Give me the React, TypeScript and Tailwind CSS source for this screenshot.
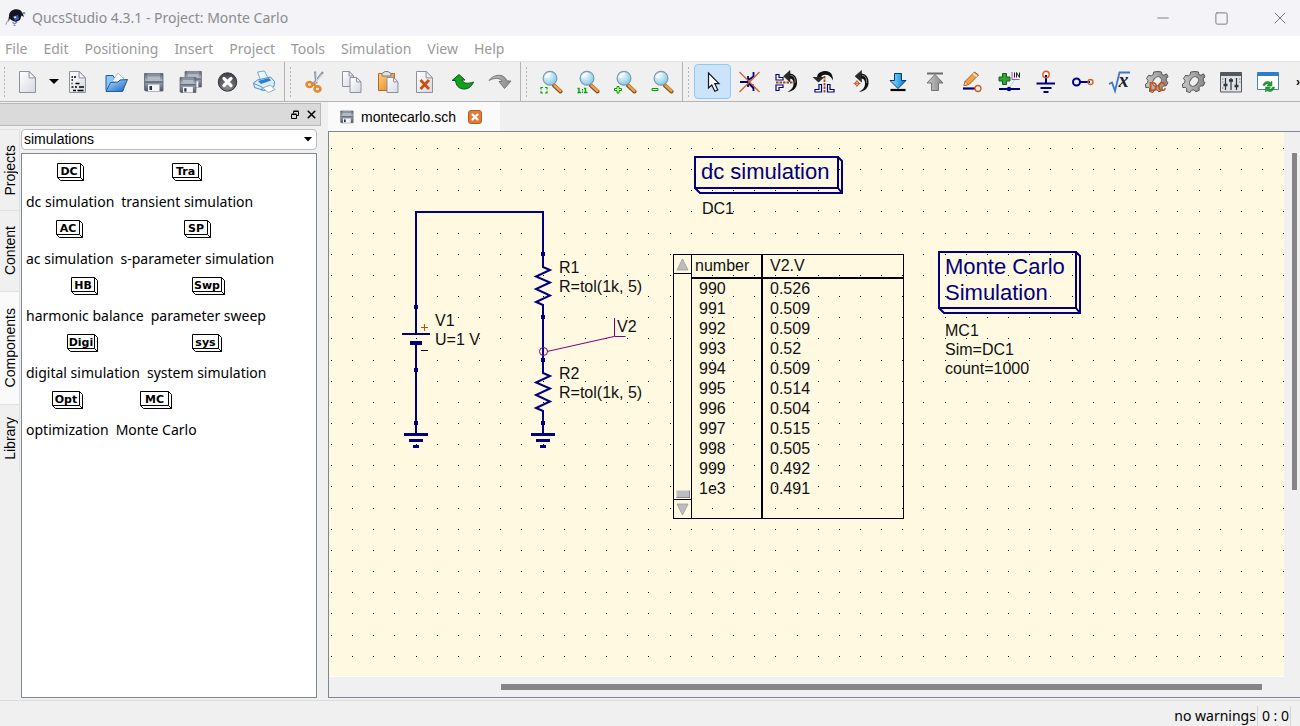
import type { ReactNode } from 'react';
import { Minus, Square, X } from 'lucide-react';

const NAVY = '#00007f';
const PITCH = 21.16;

const menus = ['File', 'Edit', 'Positioning', 'Insert', 'Project', 'Tools', 'Simulation', 'View', 'Help'];

const sideTabs = [
  { label: 'Projects', className: 'h-[81px] bg-[#f0f0f0]' },
  { label: 'Content', className: 'h-[81px] bg-[#f0f0f0]' },
  { label: 'Components', className: 'h-[113px] bg-[#fafafa]' },
  { label: 'Library', className: 'h-[68px] bg-[#f0f0f0]' },
];

const componentRows = [
  [{ icon: 'DC', w: 27, label: 'dc simulation' }, { icon: 'Tra', w: 30, label: 'transient simulation' }],
  [{ icon: 'AC', w: 27, label: 'ac simulation' }, { icon: 'SP', w: 27, label: 's-parameter simulation' }],
  [{ icon: 'HB', w: 27, label: 'harmonic balance' }, { icon: 'Swp', w: 33, label: 'parameter sweep' }],
  [{ icon: 'Digi', w: 31, label: 'digital simulation' }, { icon: 'sys', w: 30, label: 'system simulation' }],
  [{ icon: 'Opt', w: 31, label: 'optimization' }, { icon: 'MC', w: 32, label: 'Monte Carlo' }],
];

const results = [
  ['990', '0.526'],
  ['991', '0.509'],
  ['992', '0.509'],
  ['993', '0.52'],
  ['994', '0.509'],
  ['995', '0.514'],
  ['996', '0.504'],
  ['997', '0.515'],
  ['998', '0.505'],
  ['999', '0.492'],
  ['1e3', '0.491'],
];

function gridPath(cols: number, rows: number) {
  let d = '';
  for (let r = 0; r < rows; r++) {
    for (let c = 0; c < cols; c++) {
      d += `M${Math.floor(2.5 + c * PITCH)} ${Math.floor(16.4 + r * PITCH)}h1v1h-1z`;
    }
  }
  return d;
}

const dots = gridPath(100, 60);

function Icon({ children }: { children: ReactNode }) {
  return (
    <svg width="24" height="24" viewBox="0 0 24 24" className="shrink-0" aria-hidden="true">
      {children}
    </svg>
  );
}

function Gradients() {
  return (
    <svg width="0" height="0" className="absolute" aria-hidden="true">
      <defs>
        <linearGradient id="page" x1="0" y1="0" x2="1" y2="1">
          <stop offset="0" stopColor="#fff" />
          <stop offset="1" stopColor="#d6d9e2" />
        </linearGradient>
        <linearGradient id="steel" x1="0" y1="0" x2="0" y2="1">
          <stop offset="0" stopColor="#5a6370" />
          <stop offset="0.4" stopColor="#a9b2bd" />
          <stop offset="1" stopColor="#4a5568" />
        </linearGradient>
        <linearGradient id="folder" x1="0" y1="0" x2="1" y2="1">
          <stop offset="0" stopColor="#b9e0fb" />
          <stop offset="1" stopColor="#1463bd" />
        </linearGradient>
        <linearGradient id="orange" x1="0" y1="0" x2="1" y2="1">
          <stop offset="0" stopColor="#ffd27c" />
          <stop offset="1" stopColor="#e2801c" />
        </linearGradient>
        <linearGradient id="blue" x1="0" y1="0" x2="1" y2="0">
          <stop offset="0" stopColor="#9be0ff" />
          <stop offset="0.5" stopColor="#45b3f0" />
          <stop offset="1" stopColor="#0868b4" />
        </linearGradient>
        <linearGradient id="gray" x1="0" y1="0" x2="1" y2="0">
          <stop offset="0" stopColor="#c9c9c9" />
          <stop offset="1" stopColor="#868686" />
        </linearGradient>
        <radialGradient id="glass" cx="0.35" cy="0.3" r="0.8">
          <stop offset="0" stopColor="#f2fcff" />
          <stop offset="0.5" stopColor="#b5e1f5" />
          <stop offset="1" stopColor="#7ebfe2" />
        </radialGradient>
        <radialGradient id="dark" cx="0.5" cy="0.8" r="0.8">
          <stop offset="0" stopColor="#8b8d90" />
          <stop offset="1" stopColor="#3b3d42" />
        </radialGradient>
      </defs>
    </svg>
  );
}

function Page({ x = 2.5, y = 1.5, w = 16, h = 21 }) {
  const f = w * 0.4;
  return (
    <g stroke="#8d919c" strokeLinejoin="round">
      <path d={`M${x} ${y}h${w - f}l${f} ${f}v${h - f}h${-w}z`} fill="url(#page)" />
      <path d={`M${x + w - f} ${y}v${f}h${f}z`} fill="#f4f5f9" />
    </g>
  );
}

function Floppy({ x = 3.5, y = 3, s = 18 }) {
  return (
    <g transform={`translate(${x} ${y}) scale(${s / 18})`}>
      <path d="M0 0.5H18.5V18H1L0 17Z" fill="url(#steel)" stroke="#59606c" strokeWidth="0.8" />
      <path d="M3 0.8H15.5V8H3Z" fill="#b3bac4" />
      <path d="M3 0.8H15.5V3.5H3Z" fill="#87909c" />
      <path d="M3.5 11.5H15V18H3.5Z" fill="#f3f5f8" />
      <path d="M5 13H7.5V17H5Z" fill="#27303c" />
      <path d="M0.5 9H18" stroke="#3f4854" />
    </g>
  );
}

function Lens({ children }: { children: ReactNode }) {
  return (
    <Icon>
      <path d="M15 15.5L21.5 21.5" stroke="#7a4a1c" strokeWidth="4" strokeLinecap="round" />
      <path d="M15.5 15.5L21.5 21" stroke="#f0a04a" strokeWidth="2.4" strokeLinecap="round" />
      <circle cx="11" cy="8.3" r="6.9" fill="url(#glass)" stroke="#7c99a8" strokeWidth="1.2" />
      <path d="M6.8 8a4.4 4.4 0 0 1 5-4.2" stroke="#fff" strokeWidth="1.6" fill="none" />
      {children}
    </Icon>
  );
}

function Gear() {
  return (
    <g>
      <path
        d="M13 1.5l3.500.500.300 2.500 2.200.800 2.500-1.500 1.500 3-1.800 2 .300 2.500 1.500 1.200-2 3.500-2.300-.200-1.700 2 .300 2.500-3.500 1.500-1.800-2-2.500.500-1.500 2.200-3.500-1 .300-2.700-1.500-1.500-2.500.300-.300-3.500 2.200-1.400.300-2.300L1.500 8.500l2.200-3.300 2.500.800 2-1.500.500-2.500z"
        fill="url(#gray)"
        stroke="#555"
        strokeLinejoin="round"
      />
      <ellipse cx="12" cy="11.500" rx="3.800" ry="5.200" fill="#efefef" stroke="#5c5c5c" transform="rotate(38 12 11.500)" />
    </g>
  );
}

function HookArrow() {
  return (
    <g>
      <path d="M14 3.500C20 3.500 22.500 8 22 13.500S17 21.500 12.500 22C17 19.500 18.800 16.500 18.500 13S17 8.500 14 8.500z" fill="#111" />
      <path d="M8.500 6.200L15 0.500V12z" fill="#2a2a2a" stroke="#111" strokeWidth="0.500" />
      <path d="M15.500 5.500c3.500 0 4.800 3 4.600 7.500" stroke="#8a8a8a" fill="none" />
    </g>
  );
}

const fileIcons = [
  {
    name: 'Text document',
    icon: (
      <Icon>
        <Page />
        <path d="M4.500 7H6M7 7h2M4.500 10H6M4.500 13.500h1M8.500 13.500h4M4.500 17h2M8 17h2M12 17h5M6 20.500h3M10.500 20.500h6" stroke="#000" strokeWidth="1.500" />
      </Icon>
    ),
  },
  {
    name: 'Open',
    icon: (
      <Icon>
        <path d="M2 5.500h7l1 2h9v13H2z" fill="#8cc6f3" stroke="#1b5da8" />
        <path d="M8.500 11L14 3l6 6-2 7z" fill="#f7f9fd" stroke="#a1b1ca" strokeWidth="0.800" />
        <path d="M2 21.500L6.500 12.500l7.500-.5 2-2 7.500-.5-5 12z" fill="url(#folder)" stroke="#1a5dab" />
      </Icon>
    ),
  },
  { name: 'Save', icon: <Icon><Floppy /></Icon> },
  { name: 'Save all', icon: <Icon><Floppy x={7} y={1} s={16} /><Floppy x={2} y={7} s={15.5} /></Icon> },
  {
    name: 'Close',
    icon: (
      <Icon>
        <circle cx="12.500" cy="12" r="9.200" fill="url(#dark)" stroke="#33353a" />
        <path d="M9 8.500l7 7M16 8.500l-7 7" stroke="#fff" strokeWidth="3.200" strokeLinecap="round" />
      </Icon>
    ),
  },
  {
    name: 'Print',
    icon: (
      <Icon>
        <path d="M5.500 2l7-1 4 8-7 4z" fill="#eef7ff" stroke="#6fa8dd" />
        <path d="M1.500 13l4-3 13-3 4 4.500-.5 5-10 4-9.500-3z" fill="#dcecfa" stroke="#4d8fd0" />
        <path d="M6 11l11-3 2 2.500-10 3.500z" fill="#2b7fd0" />
        <path d="M2 13.500l8 3.500v4" stroke="#5a9ad8" fill="none" />
        <path d="M10.500 18l8-3 4.500 4.500-6.500 3z" fill="#fff" stroke="#7893b5" strokeWidth="0.800" />
      </Icon>
    ),
  },
];

const editIcons = [
  {
    name: 'Cut',
    icon: (
      <Icon>
        <path d="M12 1.500l1.500 12M20 2L9.500 15" stroke="#8d97a6" strokeWidth="2.200" />
        <path d="M13 3l1 9M19 4l-7 9" stroke="#e7ebf2" strokeWidth="0.800" />
        <ellipse cx="6.500" cy="14.500" rx="3" ry="2.500" fill="none" stroke="#e8882c" strokeWidth="2.600" />
        <ellipse cx="14.500" cy="19" rx="3" ry="2.600" fill="none" stroke="#e8882c" strokeWidth="2.600" />
        <path d="M10 14l3 2" stroke="#e8882c" strokeWidth="2.500" />
      </Icon>
    ),
  },
  { name: 'Copy', icon: <Icon><Page x={2.5} y={1.5} w={11} h={15} /><Page x={10} y={7.5} w={11} h={15} /></Icon> },
  {
    name: 'Paste',
    icon: (
      <Icon>
        <path d="M1.500 3.500h16v17h-16z" fill="url(#orange)" stroke="#b8691d" />
        <path d="M5 6V3.500l3-2h3l3 2V6z" fill="#dfe2e8" stroke="#777d88" />
        <Page x={10} y={7.5} w={11} h={15} />
      </Icon>
    ),
  },
  {
    name: 'Delete',
    icon: (
      <Icon>
        <Page x={2.5} />
        <path d="M6.500 10l8.500 9M15 10l-8.500 9" stroke="#cc4f12" strokeWidth="2.800" />
      </Icon>
    ),
  },
  {
    name: 'Undo',
    icon: (
      <Icon>
        <path d="M1 10.500L8 4.500l6 5.500h-3c1 3 5 4.500 11.500 2-2 5-5.500 7-9.500 7-5 0-8-3.500-8.500-8.500z" fill="#14a01c" stroke="#0a5c10" strokeLinejoin="round" />
      </Icon>
    ),
  },
  {
    name: 'Redo',
    icon: (
      <Icon>
        <path d="M1 10.500C5 4.500 16 2.500 19 11h4l-6.500 7.500-5.500-7h3C12.500 7.500 6 7.500 1 10.500z" fill="url(#gray)" stroke="#767676" strokeLinejoin="round" />
      </Icon>
    ),
  },
];

const zoomIcons = [
  { name: 'Zoom to fit', icon: <Lens><path d="M2 19.500V17.500h2M6 17.500h2v2M8 21v2H6M4 23H2V21" stroke="#0aa00a" strokeWidth="1.200" fill="none" /></Lens> },
  { name: 'Zoom 1:1', icon: <Lens><path d="M1.500 18.500h1.500v4M1.500 22.500h3.500M6.500 19v1.500M6.500 21.500v1.500M8 18.500h1.500v4M8 22.500h3.500" stroke="#0aa00a" strokeWidth="1.400" fill="none" /></Lens> },
  { name: 'Zoom in', icon: <Lens><path d="M4 16.500h2v2h2.500v2H6v2.500H4v-2.500H1.500v-2H4z" fill="#d3ffc0" stroke="#0aa00a" /></Lens> },
  { name: 'Zoom out', icon: <Lens><path d="M2 18.500h6v2H2z" fill="#d3ffc0" stroke="#0aa00a" /></Lens> },
];

const drawIcons = [
  { name: 'Select', icon: <Icon><path d="M7.500 3v15l3.300-3 3 6.300 3-1.400-3-6.200h4.200z" fill="#fff" stroke="#15151f" strokeWidth="1.200" /></Icon> },
  {
    name: 'Deactivate',
    icon: (
      <Icon>
        <path d="M2 12h8M10 6v11M10.500 10l5-3.500V2M10.500 13l5 4v4" stroke={NAVY} strokeWidth="1.800" fill="none" />
        <path d="M11 15l4.500-1-.5 5z" fill={NAVY} />
        <path d="M1.500 2l20 20M21.500 2l-20 20" stroke="#d0632a" strokeWidth="1.300" />
      </Icon>
    ),
  },
  {
    name: 'Mirror about x axis',
    icon: (
      <Icon>
        <path d="M1 4.500h3v3h4V10H1zM1 15h7v2.500H4v3H1z" fill="#fff" stroke={NAVY} strokeWidth="1.200" />
        <HookArrow />
        <path d="M1 12.500h17" stroke="#9a4a10" strokeWidth="1.800" strokeDasharray="2.500 1" />
      </Icon>
    ),
  },
  {
    name: 'Mirror about y axis',
    icon: (
      <Icon>
        <path d="M5 8C5 3 9 1 13.500 1c5 0 7.500 3.500 7.500 9.500C19 6.500 16.500 4.500 13 4.700 10.500 5 9 6 9 8z" fill="#111" />
        <path d="M0.500 7h12L6.500 12.500z" fill="#2a2a2a" />
        <path d="M9.500 14.500v7.500H3v-2.500h4v-5zM15.500 14.500v7.500H22v-2.500h-4v-5z" fill="#fff" stroke={NAVY} strokeWidth="1.200" />
        <path d="M12.500 6v17" stroke="#9a4a10" strokeWidth="1.800" strokeDasharray="2.500 1" />
      </Icon>
    ),
  },
  {
    name: 'Rotate',
    icon: (
      <Icon>
        <g transform="translate(-2.500 0)"><HookArrow /></g>
        <circle cx="8" cy="13.500" r="2" fill="#fff" stroke="#c8561a" />
        <path d="M8 10v7M4.500 13.500h7" stroke="#c8561a" strokeWidth="0.800" />
      </Icon>
    ),
  },
  {
    name: 'Go into subcircuit',
    icon: (
      <Icon>
        <path d="M8.500 3.500h7v7h4.500L12 18.500 4 10.500h4.500z" fill="url(#blue)" stroke="#073a66" />
        <path d="M4.500 20h15" stroke="#000" strokeWidth="2.200" />
      </Icon>
    ),
  },
  {
    name: 'Go out of subcircuit',
    icon: (
      <Icon>
        <path d="M4 3.500h16" stroke="#6d6d6d" strokeWidth="2" />
        <path d="M12 4.500l8 8.500h-4.500v7.500h-7V13H4z" fill="url(#gray)" stroke="#747474" />
      </Icon>
    ),
  },
  {
    name: 'Draw wire',
    icon: (
      <Icon>
        <path d="M4 15.500l1-4L14.500 2l4 3-9.500 9.500z" fill="#f5a34a" stroke="#a65a18" />
        <path d="M4 15.500l1-4 3.500 3z" fill="#fbe3bb" stroke="#a65a18" strokeWidth="0.700" />
        <path d="M13 3.500l4 3" stroke="#eee" strokeWidth="1.500" />
        <path d="M3 18.500h12" stroke={NAVY} strokeWidth="2.200" />
        <circle cx="18" cy="18.500" r="3" fill="none" stroke="#d0601c" strokeWidth="1.300" />
      </Icon>
    ),
  },
  {
    name: 'Insert label',
    icon: (
      <Icon>
        <path d="M5.500 3.500h4v3.500H13v4H9.500v3.500h-4V11H2V7h3.500z" fill="#30a436" stroke="#14611a" />
        <path d="M15 2v7.500h7.500" stroke="#b04cc0" fill="none" />
        <path d="M17.500 2.500v5M19.500 7.500v-5l3 5v-5" stroke="#222" fill="none" />
        <path d="M17.500 10L12 18.500" stroke="#a7dcef" />
        <path d="M2 19h21" stroke={NAVY} strokeWidth="2" />
        <circle cx="12" cy="19" r="2.200" fill={NAVY} />
      </Icon>
    ),
  },
  {
    name: 'Ground',
    icon: (
      <Icon>
        <path d="M12 5v9M2.500 13.500h18.500M6.500 18h11M9.500 22h5" stroke={NAVY} strokeWidth="2" />
        <circle cx="12" cy="4.500" r="3.200" fill="none" stroke="#d0601c" strokeWidth="1.400" />
      </Icon>
    ),
  },
  {
    name: 'Port',
    icon: (
      <Icon>
        <circle cx="5.500" cy="12" r="3.500" fill="#efefef" stroke={NAVY} strokeWidth="2" />
        <path d="M9 12h10" stroke={NAVY} strokeWidth="2" />
        <circle cx="19.500" cy="12" r="2.500" fill="none" stroke="#d0601c" strokeWidth="1.300" />
      </Icon>
    ),
  },
  {
    name: 'Equation',
    icon: (
      <Icon>
        <path d="M1 14l3-1.500 3 8.500L11.500 2.500H22" fill="none" stroke="#3a78c8" strokeWidth="1.800" />
        <text x="10.500" y="17" fontFamily="Liberation Serif, serif" fontStyle="italic" fontWeight="bold" fontSize="20" fill="#222">x</text>
      </Icon>
    ),
  },
  {
    name: 'DC bias',
    icon: (
      <Icon>
        <Gear />
        <text x="4" y="21" fontFamily="Liberation Sans, sans-serif" fontWeight="bold" fontSize="12" fill="#d0510c">DC</text>
      </Icon>
    ),
  },
  { name: 'Simulate', icon: <Icon><Gear /></Icon> },
  {
    name: 'Tune',
    icon: (
      <Icon>
        <path d="M1.500 2.500h21v19.500h-21z" fill="#dfe3e5" stroke="#54595e" />
        <path d="M1.500 2.500h21v3.500h-21z" fill="#54595e" />
        <path d="M6.500 8v12M12 8v12M17.500 8v12" stroke="#30363b" strokeWidth="1.200" />
        <path d="M4.500 15h4M10 10.500h4M15.500 16h4" stroke="#30363b" strokeWidth="2.600" />
        <path d="M3 9h1.500M3 12h1.500M3 18h1.500M20 9h1.500M20 12h1.500" stroke="#798086" />
      </Icon>
    ),
  },
  {
    name: 'View data display',
    icon: (
      <Icon>
        <path d="M1.500 2.500h21v17h-21z" fill="#fff" stroke="#4486c4" />
        <path d="M1.500 2h21v4h-21z" fill="#2b7fce" />
        <path d="M7 15.500c.5-4 5-5 7.500-3l1.500-1.500v5h-5l1.500-1.500c-1.500-1-3-.5-3.500 1zM18.500 17c-.5 4.500-5 5.500-7.500 3.500L9.500 22v-5h5L13 18.500c1.500 1 3 .5 3.500-1.500z" fill="#22a038" stroke="#12702a" strokeWidth="0.500" />
      </Icon>
    ),
  },
];

function ToolButton({ name, active = false, children }: { name: string; active?: boolean; children: ReactNode }) {
  return (
    <button
      type="button"
      aria-label={name}
      className={
        active
          ? 'flex h-[35px] w-[37px] shrink-0 items-center justify-center rounded-sm border border-[#90c8f0] bg-[#cce4fb]'
          : 'flex h-[35px] w-[37px] shrink-0 items-center justify-center'
      }
    >
      {children}
    </button>
  );
}

function Handle() {
  return <div className="mx-1 h-8 w-[3px] shrink-0 bg-[radial-gradient(#b4b4b4_1px,transparent_1px)] bg-[size:3px_4px]" />;
}

// Bevelled box with the short name of a simulation component
function ComponentBox({ label, w }: { label: string; w: number }) {
  return (
    <svg width={w} height="18" className="block" aria-hidden="true">
      <path
        d={`M0.500 0.500h${w - 4}v14H0.500zM${w - 3.5} 0.500l3 3v14H3.500l-3-3M${w - 3.5} 14.500l3 3`}
        fill="#fff"
        stroke="#000"
      />
      <text x={(w - 3) / 2} y="12" textAnchor="middle" fontFamily="DejaVu Sans, sans-serif" fontWeight="bold" fontSize="11">
        {label}
      </text>
    </svg>
  );
}

function Label({ className, children }: { className: string; children: ReactNode }) {
  return <div className={`absolute text-base leading-[19px] whitespace-pre text-[#111] ${className}`}>{children}</div>;
}

function Resistor({ y }: { y: number }) {
  return (
    <g transform={`translate(214 ${y})`} stroke={NAVY} strokeWidth="2" fill="none">
      <path d="M0 -10V3l7 3-14 6.500 14 6-14 6.500 14 6.500-14 6.500L0 41v12" />
      <path d="M-2 -10h4M-2 53h4" strokeWidth="4" />
    </g>
  );
}

function Schematic() {
  return (
    <svg className="absolute inset-0 size-full" aria-hidden="true">
      <path d={dots} fill="#000" shapeRendering="crispEdges" />
      <g stroke={NAVY} strokeWidth="2" fill="none">
        <path d="M87 201V80h127v44M214 184v46M87 212v80M87 292v10M214 291v10" />
        <path d="M73 202h28" />
        <path d="M81 211h12" strokeWidth="4" />
        <path d="M75 302.500h24M202 302.500h24" strokeWidth="3" />
        <path d="M80 308.500h14M207 308.500h14" strokeWidth="3" />
        <path d="M84 314.500h6M211 314.500h6" strokeWidth="3" />
        <path d="M85 175h4M85 238h4M85 291h4M212 291h4" strokeWidth="4" />
      </g>
      <Resistor y={132} />
      <Resistor y={238} />
      <path d="M92 195.500h7M95.500 192v7" stroke="#c05010" />
      <path d="M92 218.500h7" stroke="#111" />
      <circle cx="214.500" cy="219.500" r="4" fill="none" stroke="#7f007f" />
      <path d="M218 219.500l67-15M285.500 186v18.500h11" fill="none" stroke="#7f007f" />
    </svg>
  );
}

function SimulationBox({ className, w, h, children }: { className: string; w: number; h: number; children: ReactNode }) {
  return (
    <div className={`absolute pt-[3px] pl-[7px] text-[22px] leading-[26px] text-[#00007f] ${className}`}>
      <svg className="absolute top-0 left-0" width={w + 6} height={h + 6} aria-hidden="true">
        <path
          d={`M1 1h${w - 2}v${h - 2}H1zM${w - 1} 1l4 4v${h - 1}H6l-5-5M${w - 1} ${h - 1}l4 5`}
          fill="none"
          stroke={NAVY}
          strokeWidth="2"
        />
      </svg>
      <span className="relative">{children}</span>
    </div>
  );
}

function ResultTable() {
  return (
    <div className="absolute top-[122px] left-[344px] flex h-[265px] w-[231px] border border-black">
      <div className="flex w-[18px] shrink-0 flex-col items-center border-r border-black">
        <div className="flex h-[19px] w-full items-center justify-center border-b border-black">
          <svg width="13" height="13" aria-hidden="true">
            <path d="M6.500 1L12 12H1z" fill="#bdbdbd" stroke="#999" strokeWidth="0.800" />
          </svg>
        </div>
        <div className="mt-auto mb-px h-2 w-[14px] border border-t-[#ddd] border-r-[#888] border-b-[#888] border-l-[#ddd] bg-[#bdbdbd]" />
        <div className="flex h-[19px] w-full items-center justify-center border-t border-black">
          <svg width="13" height="13" aria-hidden="true">
            <path d="M6.500 12L12 1H1z" fill="#bdbdbd" stroke="#999" strokeWidth="0.800" />
          </svg>
        </div>
      </div>
      <table className="h-full grow table-fixed border-collapse text-left text-base leading-5 text-[#111]">
        <thead>
          <tr className="h-[23px] border-b-2 border-black">
            <th scope="col" className="w-[70px] border-r-2 border-black p-0 pl-[3px] font-normal">number</th>
            <th scope="col" className="p-0 pl-[7px] font-normal">V2.V</th>
          </tr>
        </thead>
        <tbody>
          {results.map(([n, v]) => (
            <tr key={n} className="h-5">
              <td className="border-r-2 border-black p-0 pl-[7px]">{n}</td>
              <td className="p-0 pl-[7px]">{v}</td>
            </tr>
          ))}
          <tr>
            <td className="border-r-2 border-black" />
            <td />
          </tr>
        </tbody>
      </table>
    </div>
  );
}

export default function App() {
  return (
    <div className="flex h-screen flex-col overflow-hidden bg-[#f0f0f0] font-['Liberation_Sans',Arial,sans-serif] text-sm text-black">
      <Gradients />
      <header className="flex h-9 shrink-0 items-center bg-[#f3f3f8] pl-[5px]">
        <svg width="22" height="20" viewBox="0 0 22 20" aria-hidden="true">
          <path d="M4 8C4 3 9 0.500 13 1.500c3 .5 4 2 4 3.500l3.500-1-2.500 2 1 3-2.500-1.500L15 12l-4 2-4-1.500L5 11l-2 3z" fill="#15151f" />
          <path d="M5 11c-2 1-3.500 3-4 5.500M17 5l3.500 1" stroke="#8b8fa8" fill="none" />
          <path d="M8 8.500l5-1.500 1 4-4 2z" fill="#3d5fae" />
          <path d="M9 9.500l2-.5" stroke="#dfe8ff" strokeWidth="1.500" />
          <path d="M7.500 14l2 2 2.500-2M8.500 17.500h2" stroke="#6d87c6" strokeWidth="1.200" fill="none" />
        </svg>
        <h1 className="ml-[5px] font-['Noto_Sans',sans-serif] text-sm text-[#8b8b8f]">QucsStudio 4.3.1 - Project: Monte Carlo</h1>
        <div className="ml-auto flex items-center text-[#777]">
          <button type="button" aria-label="Minimize" className="flex w-[38px] justify-center"><Minus size={18} strokeWidth={1.2} /></button>
          <button type="button" aria-label="Maximize" className="flex w-[78px] justify-center"><Square size={15} strokeWidth={1.5} /></button>
          <button type="button" aria-label="Close window" className="flex w-10 justify-center"><X size={20} strokeWidth={1.2} /></button>
        </div>
      </header>

      <nav className="flex h-[25px] shrink-0 items-center gap-4 bg-white pl-[5px] font-['Noto_Sans',sans-serif] text-sm text-[#9a9a9a]">
        {menus.map((menu) => (
          <button key={menu} type="button">{menu}</button>
        ))}
      </nav>

      <div className="flex h-[41px] shrink-0 items-center overflow-hidden border-t border-b border-t-[#e4e4e4] border-b-[#b4b4b4]">
        <div className="flex h-full w-[285px] shrink-0 items-center border-r border-[#b4b4b4]">
          <div className="-ml-px flex"><Handle /></div>
          <ToolButton name="New"><Icon><Page /></Icon></ToolButton>
          <button type="button" aria-label="New document menu" className="flex w-[13px] shrink-0 justify-center">
            <svg width="10" height="6" aria-hidden="true"><path d="M0 0h10L5 5z" /></svg>
          </button>
          {fileIcons.map((t) => <ToolButton key={t.name} name={t.name}>{t.icon}</ToolButton>)}
        </div>
        <div className="flex h-full w-[236px] shrink-0 items-center border-r border-[#b4b4b4]">
          <Handle />
          {editIcons.map((t) => <ToolButton key={t.name} name={t.name}>{t.icon}</ToolButton>)}
        </div>
        <div className="flex h-full w-[162px] shrink-0 items-center border-r border-[#b4b4b4]">
          <Handle />
          {zoomIcons.map((t) => <ToolButton key={t.name} name={t.name}>{t.icon}</ToolButton>)}
        </div>
        <div className="flex h-full min-w-0 grow items-center">
          <Handle />
          {drawIcons.map((t, i) => <ToolButton key={t.name} name={t.name} active={i === 0}>{t.icon}</ToolButton>)}
          <button type="button" aria-label="More tools" className="ml-auto shrink-0 text-xs font-bold">›</button>
        </div>
      </div>

      <div className="flex min-h-0 grow">
        <aside className="flex w-[321px] shrink-0 flex-col pt-px">
          <div className="flex h-[23px] shrink-0 items-center justify-end gap-[5px] border border-l-0 border-[#b8b8b8] bg-[#dadada] pr-[2px]">
            <button type="button" aria-label="Float panel">
              <svg width="10" height="10" viewBox="0 0 10 10" aria-hidden="true">
                <path d="M3.500 3.500v-2h5v4h-2M1.500 4.500h5v4h-5zM1.500 4h5M3.500 1h5" fill="none" stroke="#000" />
              </svg>
            </button>
            <button type="button" aria-label="Close panel"><X size={13} strokeWidth={3} /></button>
          </div>
          <div className="flex min-h-0 grow pt-[3px]">
            <div className="flex w-5 shrink-0 flex-col">
              {sideTabs.map((tab) => (
                <button key={tab.label} type="button" className={`flex items-center justify-center border-t border-r border-[#e0e0e0] ${tab.className}`}>
                  <span className="rotate-180 [writing-mode:vertical-rl]">{tab.label}</span>
                </button>
              ))}
            </div>
            <div className="flex min-w-0 grow flex-col pr-1 pl-px">
              <div className="relative">
                <select aria-label="Component category" className="block h-[21px] w-full appearance-none rounded-[4px] border border-[#bcbcbc] bg-white pl-[2px] text-sm leading-[19px]">
                  <option>simulations</option>
                </select>
                <svg width="8" height="5" className="pointer-events-none absolute top-2 right-[5px]" aria-hidden="true"><path d="M0 0h8L4 4.500z" /></svg>
              </div>
              <div className="mt-[3px] mb-[2px] flex min-h-0 grow flex-col border border-[#7f8694] bg-white pt-[9px] pl-1 font-['Noto_Sans',sans-serif] text-sm">
                {componentRows.map((row) => (
                  <div key={row[0].label} className="flex h-[57px] shrink-0 gap-[7px]">
                    {row.map((item) => (
                      <button key={item.label} type="button" className="flex flex-col items-center justify-start gap-[11px]">
                        <ComponentBox label={item.icon} w={item.w} />
                        <span className="leading-5">{item.label}</span>
                      </button>
                    ))}
                  </div>
                ))}
              </div>
            </div>
          </div>
        </aside>

        <main className="ml-[7px] flex min-w-0 grow flex-col">
          <div className="flex h-[29px] shrink-0">
            <div className="flex w-[172px] items-center bg-[#fafafa] pl-3">
              <svg width="14" height="14" viewBox="0 0 24 24" aria-hidden="true"><Floppy x={1} y={1} s={21} /></svg>
              <span className="ml-[7px] grow">montecarlo.sch</span>
              <button type="button" aria-label="Close document" className="mr-[18px] flex size-[14px] items-center justify-center rounded-[3px] border border-[#b85c1e] bg-[#df7d3c] text-white">
                <X size={10} strokeWidth={5} />
              </button>
            </div>
          </div>
          <div className="mb-[2px] flex min-h-0 grow border-t border-b border-l border-[#7f8694]">
            <div className="flex min-w-0 grow flex-col">
              <div className="relative min-h-0 grow overflow-hidden border-b border-white bg-[#fff9e1]">
                <Schematic />
                <Label className="top-[126px] left-[230px]">{'R1\nR=tol(1k, 5)'}</Label>
                <Label className="top-[232px] left-[230px]">{'R2\nR=tol(1k, 5)'}</Label>
                <Label className="top-[179px] left-[106px]">{'V1\nU=1 V'}</Label>
                <Label className="top-[185px] left-[288px]">V2</Label>
                <SimulationBox className="top-[24px] left-[365px] h-[38px] w-[149px]" w={145} h={33}>dc simulation</SimulationBox>
                <Label className="top-[67px] left-[373px]">DC1</Label>
                <ResultTable />
                <SimulationBox className="top-[119px] left-[609px] h-[64px] w-[144px]" w={139} h={58}>Monte Carlo<br />Simulation</SimulationBox>
                <Label className="top-[189px] left-[616px]">{'MC1\nSim=DC1\ncount=1000'}</Label>
              </div>
              <div className="flex h-5 shrink-0 items-center pr-[22px] pl-[172px]">
                <div className="h-[6px] grow bg-[#858585]" />
              </div>
            </div>
            <div className="flex w-4 shrink-0 flex-col items-end pt-[21px] pr-[3px]">
              <div className="h-[337px] w-[5px] bg-[#858585]" />
            </div>
          </div>
        </main>
      </div>

      <footer className="flex h-[26px] shrink-0 items-center justify-end border-t border-[#dcdcdc] pt-[5px] pr-[9px] font-['Noto_Sans',sans-serif] text-sm">
        <span className="border-r border-[#d4d4d4] pr-px leading-5">no warnings</span>
        <span className="border-r border-[#d4d4d4] pr-px pl-1 leading-5">0 : 0</span>
      </footer>
    </div>
  );
}
